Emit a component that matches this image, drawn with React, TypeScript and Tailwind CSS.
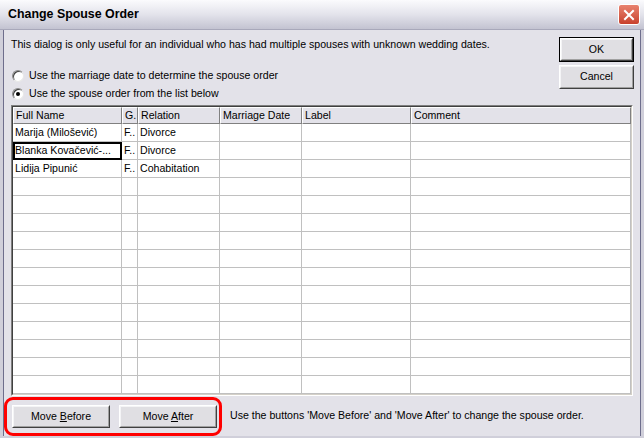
import React from 'react';

const COLS = ['Full Name', 'G.', 'Relation', 'Marriage Date', 'Label', 'Comment'];

const ROWS: string[][] = [
  ['Marija (Milošević)', 'F..', 'Divorce', '', '', ''],
  ['Blanka Kovačević-...', 'F..', 'Divorce', '', '', ''],
  ['Lidija Pipunić', 'F..', 'Cohabitation', '', '', ''],
];

const gridCols = 'grid grid-cols-[109px_16px_82px_82px_109px_1fr]';

function Button({ children, w, isDefault }: { children: React.ReactNode; w: string; isDefault?: boolean }) {
  return (
    <div className={`${w} h-full ${isDefault ? 'border border-black' : ''}`}>
      <div className="h-full border border-t-white border-l-white border-r-[#404040] border-b-[#404040]">
        <div className="h-full flex items-center justify-center bg-[#e0dfe3] border border-t-[#f4f4f6] border-l-[#f4f4f6] border-r-[#a0a0a0] border-b-[#a0a0a0] text-black">
          <span>{children}</span>
        </div>
      </div>
    </div>
  );
}

function Radio({ checked, label }: { checked?: boolean; label: string }) {
  return (
    <div className="flex items-center h-[18px]">
      <div className="w-[12px] h-[12px] ml-[1px] mr-[5px] rounded-full border border-[#8a8a8a] border-b-[#e8e8e8] border-r-[#e8e8e8] bg-white flex items-center justify-center shadow-[inset_1px_1px_0_#404040]">
        {checked && <div className="w-[4px] h-[4px] rounded-full bg-black" />}
      </div>
      <span>{label}</span>
    </div>
  );
}

export default function App() {
  return (
    <div
      className="w-[644px] h-[438px] flex flex-col bg-[#d0cfda] overflow-hidden text-[10.6px] text-black"
      style={{ fontFamily: '"Liberation Sans", Arial, sans-serif' }}
    >
      {/* title bar */}
      <div className="h-[30px] shrink-0 flex items-center justify-between pl-[8px] pr-[4px] bg-gradient-to-b from-[#fbfbfd] via-[#e3e3eb] to-[#c3c3d1] border-b border-[#a8a8ba]">
        <span className="font-bold text-[12.4px] text-black">Change Spouse Order</span>
        <div className="w-[22px] h-[21px] rounded-[3px] border border-white bg-gradient-to-b from-[#e8826f] to-[#c8402c] flex items-center justify-center">
          <svg width="12" height="12" viewBox="0 0 12 12">
            <path d="M2 2 L10 10 M10 2 L2 10" stroke="white" strokeWidth="2" strokeLinecap="square" />
          </svg>
        </div>
      </div>

      {/* body */}
      <div className="flex-1 flex flex-col ml-[3px] mr-[3px] mb-[2px] border-l border-r border-[#6e6e8c] bg-[#e3e2e9]">
        <div className="flex pl-[7px] pr-[6px] pt-[7px] h-[75px]">
          <div className="flex-1">
            <div className="leading-[14px]">
              This dialog is only useful for an individual who has had multiple spouses with unknown wedding dates.
            </div>
            <div className="mt-[16px]">
              <Radio label="Use the marriage date to determine the spouse order" />
              <Radio checked label="Use the spouse order from the list below" />
            </div>
          </div>
          <div className="w-[75px] flex flex-col gap-[3px]">
            <div className="h-[25px]">
              <Button w="w-[75px]" isDefault>OK</Button>
            </div>
            <div className="h-[24px]">
              <Button w="w-[75px]">Cancel</Button>
            </div>
          </div>
        </div>

        {/* grid */}
        <div className="mx-[7px] h-[291px] border border-[#7f7f7f] border-b-white border-r-white overflow-hidden">
          <div className="h-full border border-[#404040] border-b-[#d4d0c8] border-r-[#d4d0c8] bg-white overflow-hidden">
            <div className={`${gridCols} h-[17px] bg-[#e3e2e9]`}>
              {COLS.map((c) => (
                <div key={c} className="border-t border-l border-white border-r border-b border-r-[#808080] border-b-[#808080] pl-[2px] leading-[15px] whitespace-nowrap overflow-hidden">
                  {c}
                </div>
              ))}
            </div>
            {Array.from({ length: 15 }).map((_, i) => {
              const row = ROWS[i] ?? ['', '', '', '', '', ''];
              return (
                <div key={i} className={`${gridCols} h-[18px]`}>
                  {row.map((cell, j) => (
                    <div
                      key={j}
                      className={`border-r border-b border-[#c0c0c0] leading-[17px] whitespace-nowrap overflow-hidden pl-[2px] ${
                        i === 1 && j === 0 ? 'outline-2 outline-black -outline-offset-2' : ''
                      }`}
                    >
                      {cell}
                    </div>
                  ))}
                </div>
              );
            })}
          </div>
        </div>

        {/* bottom */}
        <div className="flex items-center mt-[1px]">
          <div className="w-[218px] h-[39px] -mb-[2px] border-[3px] border-[#ff0000] rounded-[9px] flex items-center gap-[9px] pl-[5px]">
            <div className="h-[23px]">
              <Button w="w-[98px]">
                Move <u>B</u>efore
              </Button>
            </div>
            <div className="h-[23px]">
              <Button w="w-[98px]">
                Move <u>A</u>fter
              </Button>
            </div>
          </div>
          <span className="ml-[8px]">Use the buttons 'Move Before' and 'Move After' to change the spouse order.</span>
        </div>
      </div>
    </div>
  );
}
